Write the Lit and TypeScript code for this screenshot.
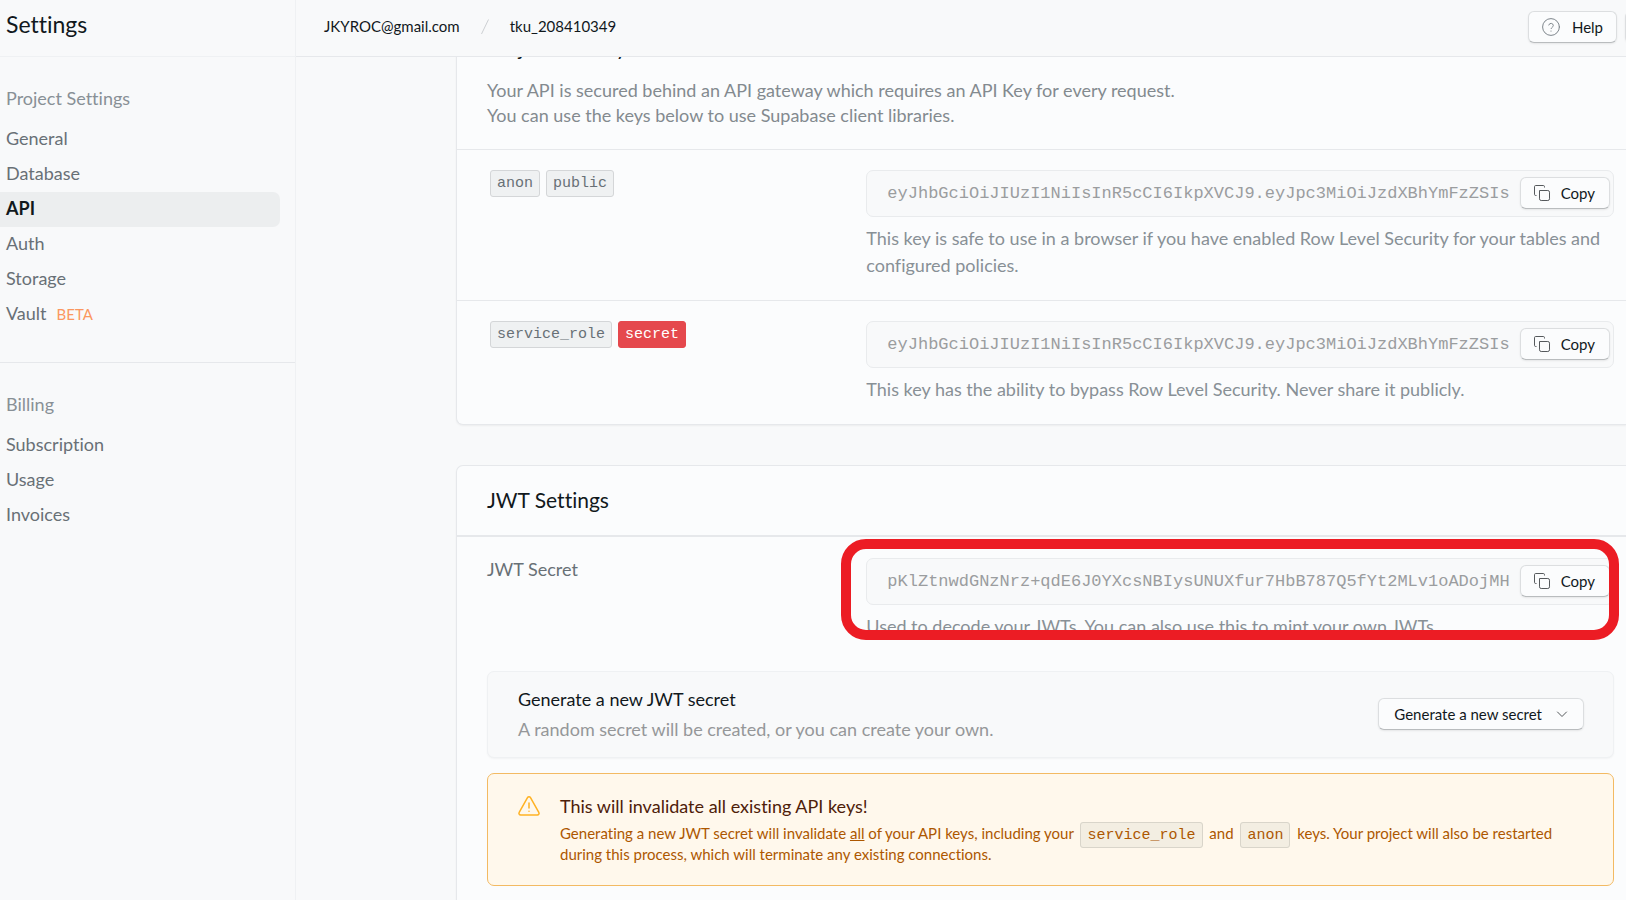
import { LitElement, html, css } from "lit";
import { customElement } from "lit/decorators.js";
import { classMap } from "lit/directives/class-map.js";

type NavItem = { label: string; tag?: string; active?: boolean };
type NavGroup = { title: string; items: NavItem[] };

const NAV: NavGroup[] = [
  {
    title: "Project Settings",
    items: [
      { label: "General" },
      { label: "Database" },
      { label: "API", active: true },
      { label: "Auth" },
      { label: "Storage" },
      { label: "Vault", tag: "BETA" },
    ],
  },
  {
    title: "Billing",
    items: [{ label: "Subscription" }, { label: "Usage" }, { label: "Invoices" }],
  },
];

const API_KEY = "eyJhbGciOiJIUzI1NiIsInR5cCI6IkpXVCJ9.eyJpc3MiOiJzdXBhYmFzZSIs";
const JWT_SECRET = "pKlZtnwdGNzNrz+qdE6J0YXcsNBIysUNUXfur7HbB787Q5fYt2MLv1oADojMH";

const copyIcon = html`<svg class="icon" width="18" height="18" viewBox="0 0 18 18" fill="none" stroke="currentColor" aria-hidden="true">
  <path d="M6.5 6.5h8.3q1.7 0 1.7 1.7v6.6q0 1.7-1.7 1.7H8.2q-1.7 0-1.7-1.7z" />
  <path d="M3.5 11.5H2.7q-1.2 0-1.2-1.2V2.7q0-1.2 1.2-1.2h7.6q1.2 0 1.2 1.2v.8" />
</svg>`;

@customElement("secret-field")
export class SecretField extends LitElement {
  static properties = {
    label: { type: String },
    value: { type: String },
    note: { type: String },
  };
  declare label: string;
  declare value: string;
  declare note: string;

  static styles = css`
    :host {
      display: block;
    }
    .box {
      display: flex;
      align-items: center;
      height: 47px;
      box-sizing: border-box;
      padding: 0 3px 1px 0;
      border: 1px solid #e9ebed;
      border-radius: 7px;
      background: #f8f9fa;
    }
    .input {
      flex: 1;
      min-width: 0;
      height: 100%;
      padding: 0 0 0 20px;
      border: 0;
      outline: 0;
      background: none;
      color: #9b9d9f;
      font: 17px "Liberation Mono", monospace;
    }
    .copy {
      display: flex;
      align-items: center;
      gap: 10px;
      height: 32px;
      padding: 0 14px 0 12px;
      box-sizing: border-box;
      border: 1px solid #dcdee0;
      border-bottom-color: #b9bcbe;
      border-radius: 6px;
      background: #fbfcfd;
      box-shadow: 0 1px 2px rgb(0 0 0 / 8%);
      color: #11181c;
      font: 15px Lato, sans-serif;
    }
    .icon {
      color: #55595c;
    }
    .note {
      margin: 8px 0 0;
      color: #889096;
      font-size: 18px;
      line-height: 27px;
    }
  `;

  render() {
    return html`
      <div class="box">
        <input class="input" type="text" readonly aria-label=${this.label} .value=${this.value} />
        <button class="copy" type="button">${copyIcon}Copy</button>
      </div>
      <p class="note">${this.note}</p>
    `;
  }
}

@customElement("app-root")
export class AppRoot extends LitElement {
  static styles = css`
    :host {
      display: grid;
      grid-template-columns: 296px minmax(0, 1fr);
      height: 100vh;
      overflow: hidden;
      background: #f8f9fa;
      color: #11181c;
      font-family: Lato, sans-serif;
      font-size: 18px;
      font-variant-ligatures: none;
    }
    h1,
    h2,
    h3,
    p {
      margin: 0;
      font-weight: 400;
    }
    a {
      color: inherit;
      text-decoration: none;
    }
    .sidebar {
      border-right: 1px solid #eff1f3;
    }
    .side-head {
      height: 56px;
      padding-left: 6px;
      border-bottom: 1px solid #eff1f3;
    }
    .side-head h1 {
      font-size: 23px;
      line-height: 48px;
    }
    .group {
      padding: 24px 15px 30px 0;
    }
    .group + .group {
      border-top: 1px solid #e6e8eb;
    }
    .group-title {
      padding: 0 0 6px 6px;
      color: #889096;
      font-size: 18px;
      line-height: 35px;
    }
    .list {
      margin: 0;
      padding: 0;
      list-style: none;
    }
    .link {
      display: flex;
      align-items: baseline;
      gap: 10px;
      height: 35px;
      padding-left: 6px;
      border-radius: 0 7px 7px 0;
      color: #687076;
      line-height: 32px;
    }
    .link.active {
      background: #eceeef;
      color: #11181c;
      font-weight: 700;
    }
    .tag {
      color: #fb9760;
      font-size: 15px;
    }
    .page {
      display: flex;
      flex-direction: column;
      min-width: 0;
      min-height: 0;
    }
    .topbar {
      flex: none;
      display: flex;
      align-items: center;
      height: 57px;
      box-sizing: border-box;
      padding: 0 0 2px 28px;
      overflow: hidden;
      border-bottom: 1px solid #e6e8eb;
    }
    .crumbs {
      flex: 1;
      display: flex;
      align-items: center;
      gap: 20px;
      padding-bottom: 2px;
      font-size: 15px;
    }
    .btn {
      flex: none;
      display: flex;
      align-items: center;
      gap: 12px;
      height: 32px;
      padding: 0 13px;
      box-sizing: border-box;
      border: 1px solid #dcdee0;
      border-bottom-color: #b9bcbe;
      border-radius: 6px;
      background: #fbfcfd;
      box-shadow: 0 1px 2px rgb(0 0 0 / 8%);
      color: #11181c;
      font: 15px Lato, sans-serif;
    }
    .btn .icon {
      color: #7e868c;
    }
    .menu {
      gap: 14px;
      padding: 0 15px;
    }
    .menu .icon {
      color: #55595c;
    }
    .cut {
      width: 40px;
      margin: 0 -39px 0 8px;
    }
    .scroll {
      flex: 1;
      min-height: 0;
      overflow: hidden;
      padding-left: 160px;
    }
    .stack {
      display: flex;
      flex-direction: column;
      gap: 40px;
      margin-top: -45px;
    }
    .card {
      border: 1px solid #e6e8eb;
      border-right: 0;
      border-radius: 7px 0 0 7px;
      background: #fbfcfd;
      box-shadow: 0 1px 2px rgb(0 0 0 / 5%);
    }
    .card-head {
      padding: 20px 12px 21px 30px;
    }
    .card-head h2 {
      font-size: 21px;
      line-height: 28px;
    }
    .lead {
      margin-top: 17px;
      color: #838a8f;
      line-height: 25px;
    }
    .row {
      display: grid;
      grid-template-columns: minmax(0, 379fr) minmax(0, 747fr);
      padding: 20px 12px 21px 30px;
      border-top: 1px solid #e6e8eb;
    }
    .badges {
      display: flex;
      align-items: flex-start;
      gap: 6px;
      padding-left: 3px;
    }
    .code {
      padding: 4px 6px 3px;
      border: 1px solid #d4d6d8;
      border-radius: 3px;
      background: #eff1f2;
      color: #687076;
      font: 15px/18px "Liberation Mono", monospace;
    }
    .code.danger {
      border-color: #e5484d;
      background: #e5484d;
      color: #fff;
    }
    .jwt {
      padding-top: 21px;
      padding-bottom: 0;
      border-top-width: 2px;
    }
    .label {
      color: #687076;
      line-height: 22px;
    }
    .field {
      position: relative;
    }
    .marker {
      position: absolute;
      inset: -19px -5px auto -25px;
      height: 101px;
      box-sizing: border-box;
      border: 10px solid #ec1c24;
      border-radius: 25px;
      pointer-events: none;
    }
    .panels {
      display: grid;
      gap: 15px;
      padding: 31px 12px 30px 30px;
    }
    .panel {
      display: flex;
      align-items: center;
      justify-content: space-between;
      padding: 12px 29px 13px 30px;
      border: 1px solid #eff1f3;
      border-radius: 7px;
      background: #f8f9fa;
      box-shadow: 0 1px 2px rgb(0 0 0 / 4%);
    }
    .panel h3 {
      font-size: 18px;
      line-height: 30px;
    }
    .panel p {
      color: #959799;
      line-height: 30px;
    }
    .warning {
      display: flex;
      align-items: flex-start;
      gap: 20px;
      padding: 20px 30px 21px;
      border: 1px solid #f3ba63;
      border-radius: 7px;
      background: #fff8ec;
      color: #ad5700;
    }
    .warning > .icon {
      flex: none;
      color: #ffb224;
    }
    .warning h3 {
      color: #4e2009;
      font-size: 18px;
      line-height: 24px;
    }
    .warning p {
      margin-top: 5px;
      font-size: 15px;
      line-height: 20px;
    }
    .warning .code {
      margin: 0 3px;
      border-color: #d9d5ca;
      background: #f3eee2;
      color: #ad5700;
      line-height: 16px;
    }
  `;

  render() {
    return html`
      <aside class="sidebar">
        <div class="side-head"><h1>Settings</h1></div>
        <nav>
          ${NAV.map(
            (group) => html`<section class="group">
              <h2 class="group-title">${group.title}</h2>
              <ul class="list">
                ${group.items.map(
                  (item) => html`<li>
                    <a class=${classMap({ link: true, active: !!item.active })} href="#"
                      >${item.label}${item.tag ? html`<span class="tag">${item.tag}</span>` : null}</a
                    >
                  </li>`
                )}
              </ul>
            </section>`
          )}
        </nav>
      </aside>

      <div class="page">
        <header class="topbar">
          <nav class="crumbs">
            <a href="#">JKYROC@gmail.com</a>
            <svg width="10" height="18" viewBox="0 0 10 18" fill="none" stroke="#cdd0d3" aria-hidden="true">
              <path d="M8.5 2.5L1.5 17" />
            </svg>
            <a href="#">tku_208410349</a>
          </nav>
          <button class="btn" type="button">
            <svg class="icon" width="18" height="18" viewBox="0 0 18 18" fill="none" stroke="currentColor" stroke-linecap="round" aria-hidden="true">
              <circle cx="9" cy="9" r="8.4" />
              <path d="M6.8 7a2.3 2.3 0 0 1 4.5.6c0 1.5-2.2 2-2.2 2.9M9 13v.2" />
            </svg>
            Help
          </button>
          <button class="btn cut" type="button" aria-label="Notifications"></button>
        </header>

        <main class="scroll">
          <div class="stack">
            <section class="card">
              <div class="card-head">
                <h2>Project API keys</h2>
                <p class="lead">
                  Your API is secured behind an API gateway which requires an API Key for every request.<br />
                  You can use the keys below to use Supabase client libraries.
                </p>
              </div>
              <div class="row">
                <div class="badges"><code class="code">anon</code><code class="code">public</code></div>
                <secret-field
                  label="anon public"
                  value=${API_KEY}
                  note="This key is safe to use in a browser if you have enabled Row Level Security for your tables and configured policies."
                ></secret-field>
              </div>
              <div class="row">
                <div class="badges"><code class="code">service_role</code><code class="code danger">secret</code></div>
                <secret-field
                  label="service_role secret"
                  value=${API_KEY}
                  note="This key has the ability to bypass Row Level Security. Never share it publicly."
                ></secret-field>
              </div>
            </section>

            <section class="card">
              <div class="card-head"><h2>JWT Settings</h2></div>
              <div class="row jwt">
                <div class="label">JWT Secret</div>
                <div class="field">
                  <secret-field
                    label="JWT Secret"
                    value=${JWT_SECRET}
                    note="Used to decode your JWTs. You can also use this to mint your own JWTs."
                  ></secret-field>
                  <div class="marker"></div>
                </div>
              </div>
              <div class="panels">
                <div class="panel">
                  <div>
                    <h3>Generate a new JWT secret</h3>
                    <p>A random secret will be created, or you can create your own.</p>
                  </div>
                  <button class="btn menu" type="button">
                    Generate a new secret
                    <svg class="icon" width="12" height="12" viewBox="0 0 12 12" fill="none" stroke="currentColor" stroke-linecap="round" stroke-linejoin="round" aria-hidden="true">
                      <path d="M1.5 4L6 8.5 10.5 4" />
                    </svg>
                  </button>
                </div>
                <div class="warning" role="alert">
                  <svg class="icon" width="22" height="24" viewBox="0 0 22 22" fill="none" stroke="currentColor" stroke-width="1.5" stroke-linecap="round" stroke-linejoin="round" aria-hidden="true">
                    <path d="M9.5 2.6L1.2 17.4a1.7 1.7 0 0 0 1.5 2.6h16.6a1.7 1.7 0 0 0 1.5-2.6L12.5 2.6a1.7 1.7 0 0 0-3 0z" />
                    <path d="M11 8v5M11 16.2v.1" />
                  </svg>
                  <div>
                    <h3>This will invalidate all existing API keys!</h3>
                    <p>
                      Generating a new JWT secret will invalidate <u>all</u> of your API keys, including your
                      <code class="code">service_role</code> and <code class="code">anon</code> keys. Your project will
                      also be restarted during this process, which will terminate any existing connections.
                    </p>
                  </div>
                </div>
              </div>
            </section>
          </div>
        </main>
      </div>
    `;
  }
}
